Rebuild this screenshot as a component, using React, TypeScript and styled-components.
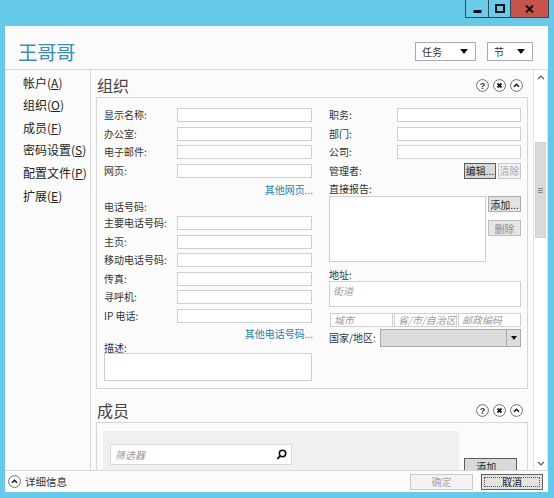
import React from "react";
import styled, { createGlobalStyle } from "styled-components";

const GlobalStyle = createGlobalStyle`
  html, body {
    margin: 0;
    padding: 0;
  }
  body {
    background: #67c9ea;
    font-family: "Noto Sans CJK SC", "Noto Sans", sans-serif;
    color: #333;
  }
  * {
    box-sizing: border-box;
  }
`;

const Screen = styled.div`
  width: 554px;
  height: 498px;
  background: #67c9ea;
  display: flex;
  flex-direction: column;
  overflow: hidden;
`;

const CaptionBar = styled.div`
  height: 26px;
  display: flex;
  justify-content: flex-end;
  align-items: flex-start;
  padding-right: 5px;
`;

const CaptionButton = styled.div<{ $w: number; $close?: boolean }>`
  width: ${(p) => p.$w}px;
  height: 18px;
  border: 1px solid #2f4a55;
  border-top: none;
  margin-left: -1px;
  background: ${(p) => (p.$close ? "#c7544b" : "#6bcbea")};
  display: flex;
  align-items: center;
  justify-content: center;
`;

const Window = styled.div`
  margin: 0 6px 0 5px;
  height: 466px;
  background: #fbfbfb;
  display: flex;
  flex-direction: column;
  overflow: hidden;
`;

const Header = styled.div`
  height: 44px;
  flex-shrink: 0;
  border-bottom: 1px solid #dadada;
  display: flex;
  align-items: center;
  justify-content: space-between;
  padding: 8px 15px 0 13px;
`;

const AppTitle = styled.div`
  font-size: 19.5px;
  color: #3a8db3;
  letter-spacing: -0.5px;
`;

const HeaderMenus = styled.div`
  display: flex;
  gap: 11px;
`;

const MenuDrop = styled.div<{ $w: number }>`
  width: ${(p) => p.$w}px;
  height: 19px;
  border: 1px solid #a9a9a9;
  background: #fff;
  display: flex;
  align-items: center;
  justify-content: space-between;
  padding: 0 7px 0 6px;
  font-size: 10px;
  color: #333;
`;

const DropArrow = styled.span`
  width: 0;
  height: 0;
  border-left: 4px solid transparent;
  border-right: 4px solid transparent;
  border-top: 5px solid #111;
`;

const Body = styled.div`
  flex: 1;
  display: flex;
  min-height: 0;
`;

const Nav = styled.div`
  width: 86px;
  flex-shrink: 0;
  border-right: 1px solid #dadada;
  padding-top: 1.7px;
`;

const NavItem = styled.div`
  height: 22.6px;
  line-height: 22.6px;
  padding-left: 18px;
  font-size: 12px;
  color: #222;
  white-space: nowrap;
`;

const Main = styled.div`
  flex: 1;
  display: flex;
  min-width: 0;
`;

const ScrollView = styled.div`
  flex: 1;
  overflow: hidden;
  padding: 3px 5px 0 5px;
`;

const SectionHead = styled.div<{ $gap?: number }>`
  height: 24px;
  margin-top: ${(p) => p.$gap ?? 0}px;
  display: flex;
  align-items: center;
  justify-content: space-between;
  padding: 0 5px 0 1px;
`;

const SectionTitle = styled.div`
  font-size: 16px;
  color: #444;
`;

const SectionTools = styled.div`
  display: flex;
  gap: 4px;
`;

const Panel = styled.div<{ $pad: string }>`
  border: 1px solid #d6d6d6;
  padding: ${(p) => p.$pad};
`;

const Columns = styled.div`
  display: flex;
  gap: 17px;
`;

const Column = styled.div<{ $w: number }>`
  width: ${(p) => p.$w}px;
  display: flex;
  flex-direction: column;
`;

const FieldRow = styled.div`
  height: 18.5px;
  display: flex;
  align-items: center;
  justify-content: space-between;
`;

const Label = styled.span`
  font-size: 10px;
  line-height: 12px;
  color: #333;
  white-space: nowrap;
`;

const TextBox = styled.div<{ $w?: number }>`
  width: ${(p) => (p.$w ? `${p.$w}px` : "auto")};
  flex: ${(p) => (p.$w ? "none" : "1")};
  height: 14px;
  border: 1px solid #cfcfcf;
  background: #fff;
  font-size: 10px;
  line-height: 12px;
  padding-left: 3px;
  font-style: italic;
  color: #9b9b9b;
  white-space: nowrap;
  overflow: hidden;
`;

const LinkRow = styled.div<{ $h: number }>`
  height: ${(p) => p.$h}px;
  display: flex;
  align-items: center;
  justify-content: flex-end;
  margin-right: -1px;
`;

const Link = styled.span`
  font-size: 10px;
  color: #2b7fa7;
`;

const GroupLabel = styled.div<{ $h: number; $top?: number }>`
  height: ${(p) => p.$h}px;
  margin-top: ${(p) => p.$top ?? 0}px;
  display: flex;
  align-items: center;
  font-size: 10px;
  color: #333;
`;

const MultiBox = styled.div<{ $h: number; $w?: number }>`
  height: ${(p) => p.$h}px;
  width: ${(p) => (p.$w ? `${p.$w}px` : "auto")};
  flex-shrink: 0;
  border: 1px solid #cfcfcf;
  background: #fff;
  padding: 1px 3px;
  font-size: 10px;
  font-style: italic;
  color: #9b9b9b;
`;

const ButtonPair = styled.div<{ $dir?: "row" | "column"; $gap: number }>`
  display: flex;
  flex-direction: ${(p) => p.$dir ?? "row"};
  gap: ${(p) => p.$gap}px;
`;

const PushButton = styled.div<{ $w: number; $kind?: "normal" | "focus" | "disabled" | "default" }>`
  position: relative;
  width: ${(p) => p.$w}px;
  height: 16px;
  display: flex;
  align-items: center;
  justify-content: center;
  font-size: 10px;
  white-space: nowrap;
  border: 1px solid
    ${(p) =>
      p.$kind === "focus" ? "#5a5a5a" : p.$kind === "disabled" ? "#c8c8c8" : p.$kind === "default" ? "#606060" : "#adadad"};
  background: ${(p) => (p.$kind === "disabled" ? "#f3f3f3" : p.$kind === "focus" ? "#d9d9d9" : "#e3e3e3")};
  color: ${(p) => (p.$kind === "disabled" ? "#a6a6a6" : "#222")};
  &::after {
    content: "";
    display: ${(p) => (p.$kind === "default" ? "block" : "none")};
    position: absolute;
    inset: 2px;
    border: 1px dotted #555;
  }
`;

const SoftButton = styled(PushButton)`
  background: #e6e6e6;
  color: #8c8c8c;
  border-color: #bdbdbd;
`;

const ReportsRow = styled.div`
  display: flex;
  gap: 2px;
`;

const CityRow = styled.div`
  display: flex;
  gap: 1px;
  margin-top: 6px;
  padding-left: 1px;
`;

const CountryRow = styled.div`
  display: flex;
  align-items: center;
  justify-content: space-between;
  margin-top: 2px;
`;

const Combo = styled.div`
  width: 141px;
  height: 18px;
  border: 1px solid #a8a8a8;
  background: #dcdcdc;
  display: flex;
  justify-content: flex-end;
`;

const ComboButton = styled.div`
  width: 14px;
  border-left: 1px solid #a8a8a8;
  display: flex;
  align-items: center;
  justify-content: center;
`;

const SmallArrow = styled.span`
  width: 0;
  height: 0;
  border-left: 3px solid transparent;
  border-right: 3px solid transparent;
  border-top: 4px solid #111;
`;

const MemberArea = styled.div`
  display: flex;
  gap: 5px;
`;

const MemberList = styled.div`
  width: 356px;
  height: 80px;
  background: #f0f0f0;
  padding: 13px 0 0 7px;
`;

const FilterBox = styled.div`
  width: 182px;
  height: 21px;
  border: 1px solid #d9d9d9;
  background: #fff;
  display: flex;
  align-items: center;
  justify-content: space-between;
  padding: 0 4px 0 4px;
  font-size: 10px;
  font-style: italic;
  color: #9b9b9b;
`;

const MemberButtons = styled.div`
  padding-top: 27px;
`;

const Scrollbar = styled.div`
  width: 15px;
  flex-shrink: 0;
  border-left: 1px solid #e2e2e2;
  border-right: 1px solid #e2e2e2;
  background: #fff;
  display: flex;
  flex-direction: column;
`;

const ScrollArrow = styled.div`
  height: 14px;
  display: flex;
  align-items: center;
  justify-content: center;
`;

const ScrollTrack = styled.div`
  flex: 1;
  padding: 58px 1px 0 1px;
`;

const Thumb = styled.div`
  height: 96px;
  background: #dadada;
  border: 1px solid #cfcfcf;
  display: flex;
  align-items: center;
  justify-content: center;
`;

const Grip = styled.div`
  width: 5px;
  height: 5px;
  border-top: 1px solid #8a8a8a;
  border-bottom: 1px solid #8a8a8a;
  position: relative;
  &::after {
    content: "";
    position: absolute;
    left: 0;
    right: 0;
    top: 1px;
    border-top: 1px solid #8a8a8a;
  }
`;

const Footer = styled.div`
  height: 22px;
  flex-shrink: 0;
  border-top: 1px solid #dadada;
  display: flex;
  align-items: center;
  justify-content: space-between;
  padding: 0 5px 0 3px;
`;

const Details = styled.div`
  display: flex;
  align-items: center;
  gap: 4px;
  font-size: 10.5px;
  color: #333;
`;

const FooterButtons = styled.div`
  display: flex;
  gap: 8px;
`;

const CircleIcon = ({ kind }: { kind: "help" | "close" | "up" }) => (
  <svg width="13" height="13" viewBox="0 0 13 13">
    <circle cx="6.5" cy="6.5" r="5.9" fill="#fff" stroke="#6e6e6e" strokeWidth="1" />
    {kind === "help" && (
      <text x="6.5" y="9.8" fontSize="9" fontWeight="bold" textAnchor="middle" fill="#333" fontFamily="Liberation Sans, sans-serif">
        ?
      </text>
    )}
    {kind === "close" && <path d="M4.5 4.5 L8.5 8.5 M8.5 4.5 L4.5 8.5" stroke="#1a1a1a" strokeWidth="1.8" />}
    {kind === "up" && <path d="M4 7.8 L6.5 5.3 L9 7.8" stroke="#1a1a1a" strokeWidth="1.6" fill="none" />}
  </svg>
);

const SearchIcon = () => (
  <svg width="11" height="11" viewBox="0 0 11 11">
    <circle cx="6.5" cy="4.5" r="3.2" fill="none" stroke="#111" strokeWidth="1.6" />
    <path d="M4.3 6.8 L1.3 9.8" stroke="#111" strokeWidth="1.8" />
  </svg>
);

const Chevron = ({ up }: { up?: boolean }) => (
  <svg width="8" height="5" viewBox="0 0 8 5">
    <path d={up ? "M1 4 L4 1 L7 4" : "M1 1 L4 4 L7 1"} stroke="#555" strokeWidth="1.1" fill="none" />
  </svg>
);

const navItems: [string, string][] = [
  ["帐户", "A"],
  ["组织", "O"],
  ["成员", "F"],
  ["密码设置", "S"],
  ["配置文件", "P"],
  ["扩展", "E"],
];

const topFields = ["显示名称:", "办公室:", "电子邮件:", "网页:"];
const phoneFields = ["主要电话号码:", "主页:", "移动电话号码:", "传真:", "寻呼机:", "IP 电话:"];
const rightFields = ["职务:", "部门:", "公司:"];

function SectionTools_() {
  return (
    <SectionTools>
      <CircleIcon kind="help" />
      <CircleIcon kind="close" />
      <CircleIcon kind="up" />
    </SectionTools>
  );
}

export default function App() {
  return (
    <>
      <GlobalStyle />
      <Screen>
        <CaptionBar>
          <CaptionButton $w={24}>
            <svg width="9" height="10" viewBox="0 0 9 10">
              <rect x="0.5" y="6" width="8" height="3" fill="#111" />
            </svg>
          </CaptionButton>
          <CaptionButton $w={23}>
            <svg width="10" height="9" viewBox="0 0 10 9">
              <rect x="1" y="1" width="8" height="7" fill="none" stroke="#111" strokeWidth="2" />
            </svg>
          </CaptionButton>
          <CaptionButton $w={39} $close>
            <svg width="9" height="8" viewBox="0 0 9 8">
              <path d="M1 0.5 L8 7.5 M8 0.5 L1 7.5" stroke="#111" strokeWidth="2" />
            </svg>
          </CaptionButton>
        </CaptionBar>

        <Window>
          <Header>
            <AppTitle>王哥哥</AppTitle>
            <HeaderMenus>
              <MenuDrop $w={61}>
                任务
                <DropArrow />
              </MenuDrop>
              <MenuDrop $w={46}>
                节
                <DropArrow />
              </MenuDrop>
            </HeaderMenus>
          </Header>

          <Body>
            <Nav>
              {navItems.map(([name, key]) => (
                <NavItem key={key}>
                  {name}(<u>{key}</u>)
                </NavItem>
              ))}
            </Nav>

            <Main>
              <ScrollView>
                <SectionHead>
                  <SectionTitle>组织</SectionTitle>
                  <SectionTools_ />
                </SectionHead>
                <Panel $pad="8px 6px 7px 7px">
                  <Columns>
                    <Column $w={208}>
                      {topFields.map((f) => (
                        <FieldRow key={f}>
                          <Label>{f}</Label>
                          <TextBox $w={135} />
                        </FieldRow>
                      ))}
                      <LinkRow $h={18}>
                        <Link>其他网页...</Link>
                      </LinkRow>
                      <GroupLabel $h={16}>电话号码:</GroupLabel>
                      {phoneFields.map((f) => (
                        <FieldRow key={f}>
                          <Label>{f}</Label>
                          <TextBox $w={135} />
                        </FieldRow>
                      ))}
                      <LinkRow $h={17}>
                        <Link>其他电话号码...</Link>
                      </LinkRow>
                      <GroupLabel $h={11}>描述:</GroupLabel>
                      <MultiBox $h={28} />
                    </Column>

                    <Column $w={192}>
                      {rightFields.map((f) => (
                        <FieldRow key={f}>
                          <Label>{f}</Label>
                          <TextBox $w={124} />
                        </FieldRow>
                      ))}
                      <FieldRow>
                        <Label>管理者:</Label>
                        <ButtonPair $gap={2}>
                          <PushButton $w={32} $kind="focus">
                            编辑...
                          </PushButton>
                          <PushButton $w={23} $kind="disabled">
                            清除
                          </PushButton>
                        </ButtonPair>
                      </FieldRow>
                      <GroupLabel $h={16}>直接报告:</GroupLabel>
                      <ReportsRow>
                        <MultiBox $h={66} $w={157} />
                        <ButtonPair $dir="column" $gap={8}>
                          <PushButton $w={33}>添加...</PushButton>
                          <SoftButton $w={33}>删除</SoftButton>
                        </ButtonPair>
                      </ReportsRow>
                      <GroupLabel $h={14} $top={5}>
                        地址:
                      </GroupLabel>
                      <MultiBox $h={26}>街道</MultiBox>
                      <CityRow>
                        <TextBox>城市</TextBox>
                        <TextBox>省/市/自治区</TextBox>
                        <TextBox>邮政编码</TextBox>
                      </CityRow>
                      <CountryRow>
                        <Label>国家/地区:</Label>
                        <Combo>
                          <ComboButton>
                            <SmallArrow />
                          </ComboButton>
                        </Combo>
                      </CountryRow>
                    </Column>
                  </Columns>
                </Panel>

                <SectionHead $gap={9}>
                  <SectionTitle>成员</SectionTitle>
                  <SectionTools_ />
                </SectionHead>
                <Panel $pad="8px 0 0 6px">
                  <MemberArea>
                    <MemberList>
                      <FilterBox>
                        筛选器
                        <SearchIcon />
                      </FilterBox>
                    </MemberList>
                    <MemberButtons>
                      <PushButton $w={53} $kind="focus">
                        添加...
                      </PushButton>
                    </MemberButtons>
                  </MemberArea>
                </Panel>
              </ScrollView>

              <Scrollbar>
                <ScrollArrow>
                  <Chevron up />
                </ScrollArrow>
                <ScrollTrack>
                  <Thumb>
                    <Grip />
                  </Thumb>
                </ScrollTrack>
                <ScrollArrow>
                  <Chevron />
                </ScrollArrow>
              </Scrollbar>
            </Main>
          </Body>

          <Footer>
            <Details>
              <CircleIcon kind="up" />
              详细信息
            </Details>
            <FooterButtons>
              <PushButton $w={63} $kind="disabled">
                确定
              </PushButton>
              <PushButton $w={62} $kind="default">
                取消
              </PushButton>
            </FooterButtons>
          </Footer>
        </Window>
      </Screen>
    </>
  );
}
